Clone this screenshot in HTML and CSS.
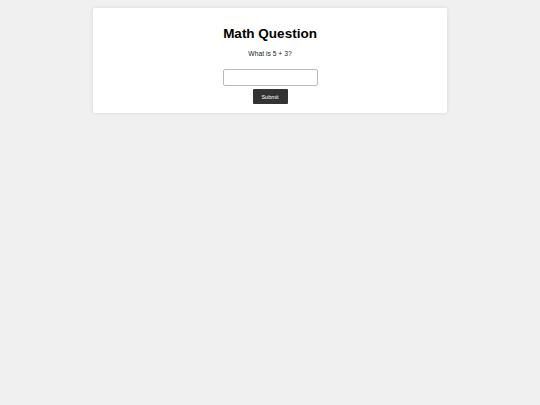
FILE: index.html
```html
<!DOCTYPE html>
<html lang="en">

<head>
  <meta charset="UTF-8" />
  <meta name="viewport" content="width=device-width, initial-scale=1.0" />
  <title>Math Question</title>
  <link rel="stylesheet" href="styles.css">
</head>

<body>
  <div class="card">
    <h1 class="title">Math Question</h1>
    <p class="question">What is 5 + 3?</p>
    <form class="answer-form" onsubmit="return false;">
      <input type="text" class="answer" name="answer">
      <button type="submit" class="submit">Submit</button>
    </form>
  </div>
</body>

</html>
```

FILE: styles.css
```css
body {
    margin: 0;
    padding: 8px;
    background: #f0f0f0;
    font-family: "Liberation Sans", Arial, sans-serif;
}
.card {
    width: 338px;
    margin: 0 auto;
    padding: 8px;
    background: #fff;
    border-radius: 2px;
    box-shadow: 0 0 4px rgba(0, 0, 0, 0.1);
    text-align: center;
}
.title {
    font-size: 13.5px;
    margin: 10px 0 9px;
    color: #000;
}
.question {
    font-size: 6.75px;
    margin: 0 0 12px;
    color: #222;
}
.answer-form {
    display: flex;
    flex-direction: column;
    align-items: center;
    gap: 3px;
    margin-bottom: 1px;
}
.answer {
    width: 95px;
    height: 17px;
    box-sizing: border-box;
    border: 1px solid #bbb;
    border-radius: 2px;
    padding: 4px;
    font-size: 6.75px;
    outline: none;
}
.submit {
    width: 35px;
    height: 15px;
    border: none;
    border-radius: 1px;
    background: #333;
    color: #fff;
    font-family: inherit;
    font-size: 5.5px;
    padding: 0;
}
```
